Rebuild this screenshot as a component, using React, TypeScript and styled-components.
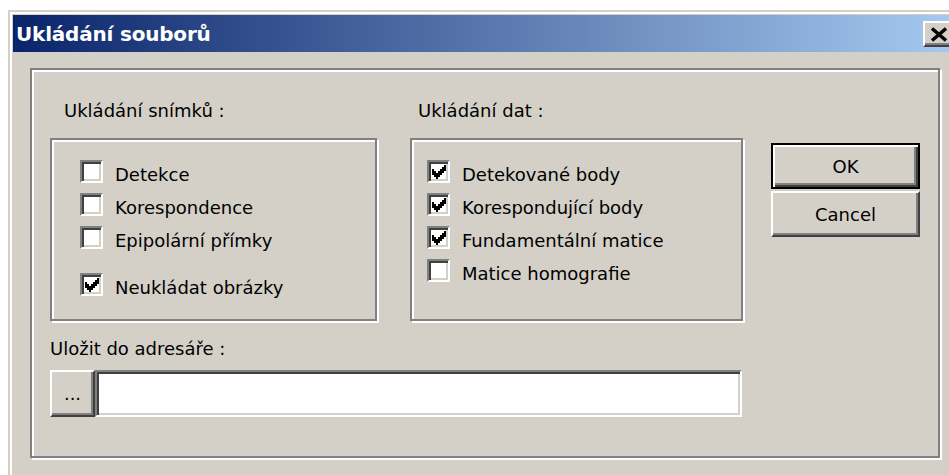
import styled, { createGlobalStyle } from "styled-components";

const face = "#d4d0c8";
const shadow = "#808080";
const darkShadow = "#404040";
const highlight = "#ffffff";

const GlobalStyle = createGlobalStyle`
  html, body {
    margin: 0;
    padding: 0;
    background: #fff;
    overflow: hidden;
  }
  body {
    font-family: "DejaVu Sans", Verdana, sans-serif;
  }
`;

const Page = styled.div`
  width: 949px;
  height: 475px;
  padding: 10px 0 0 8px;
  box-sizing: border-box;
  overflow: hidden;
`;

const Window = styled.div`
  width: 960px;
  height: 480px;
  box-sizing: border-box;
  background: ${face};
  border-top: 2px solid ${face};
  border-left: 2px solid ${face};
  box-shadow: inset 2px 2px 0 ${highlight};
  padding: 3px;
`;

const TitleBar = styled.div`
  width: 945px;
  height: 37px;
  display: flex;
  align-items: center;
  justify-content: space-between;
  background: linear-gradient(to right, #0a246a, #a6caf0);
  padding: 0 4px 0 3px;
  box-sizing: border-box;
`;

const TitleText = styled.span`
  color: #fff;
  font-weight: bold;
  font-size: 20px;
  letter-spacing: -0.2px;
`;

const CloseButton = styled.button`
  width: 31px;
  height: 26px;
  padding: 0;
  margin-top: 1px;
  box-sizing: border-box;
  background: ${face};
  border: 2px solid;
  border-color: ${highlight} ${darkShadow} ${darkShadow} ${highlight};
  box-shadow: inset -2px -2px 0 ${shadow};
  display: flex;
  align-items: center;
  justify-content: center;
`;

const Frame = styled.div`
  margin: 16px 0 0 17px;
  width: 910px;
  height: 390px;
  box-sizing: border-box;
  border: 2px solid ${shadow};
  box-shadow: inset 2px 2px 0 ${highlight}, 2px 2px 0 ${highlight};
  padding: 30px 0 0 18px;
  font-size: 18px;
  color: #000;
`;

const TopRow = styled.div`
  display: flex;
  align-items: flex-start;
`;

const Column = styled.div<{ $width: number; $gap?: number }>`
  width: ${({ $width }) => $width}px;
  margin-left: ${({ $gap }) => $gap ?? 0}px;
  display: flex;
  flex-direction: column;
`;

const Caption = styled.div<{ $indent?: number }>`
  height: 22px;
  line-height: 22px;
  padding-left: ${({ $indent }) => $indent ?? 0}px;
  white-space: nowrap;
`;

const GroupBox = styled.div<{ $padTop: number; $padLeft: number }>`
  margin-top: 16px;
  height: 183px;
  box-sizing: border-box;
  border: 2px solid ${shadow};
  box-shadow: inset 2px 2px 0 ${highlight}, 2px 2px 0 ${highlight};
  padding: ${({ $padTop, $padLeft }) => `${$padTop}px 0 0 ${$padLeft}px`};
  display: flex;
  flex-direction: column;
  gap: 10px;
`;

const CheckRow = styled.label<{ $spaced?: boolean }>`
  display: flex;
  align-items: center;
  gap: 12px;
  height: 23px;
  margin-top: ${({ $spaced }) => ($spaced ? 14 : 0)}px;
  white-space: nowrap;
`;

const CheckText = styled.span`
  line-height: 23px;
  padding-top: 5px;
`;

const Box = styled.span`
  width: 23px;
  height: 23px;
  flex: none;
  box-sizing: border-box;
  background: #fff;
  border: 2px solid;
  border-color: ${shadow} ${highlight} ${highlight} ${shadow};
  box-shadow: inset 2px 2px 0 ${darkShadow}, inset -2px -2px 0 ${face};
  display: flex;
  align-items: center;
  justify-content: center;
`;

const ButtonColumn = styled.div`
  margin-left: 28px;
  padding-top: 43px;
  display: flex;
  flex-direction: column;
  gap: 2px;
`;

const PushButton = styled.button<{ $default?: boolean }>`
  width: 149px;
  height: 46px;
  box-sizing: border-box;
  background: ${face};
  font-family: inherit;
  font-size: 18px;
  color: #000;
  padding: 0;
  border: 2px solid;
  border-color: ${({ $default }) =>
    $default
      ? "#000"
      : `${highlight} ${darkShadow} ${darkShadow} ${highlight}`};
  box-shadow: ${({ $default }) =>
    $default
      ? `inset 2px 2px 0 ${highlight}, inset -2px -2px 0 ${darkShadow}, inset -4px -4px 0 ${shadow}`
      : `inset -2px -2px 0 ${shadow}`};
`;

const PathLabel = styled.div`
  margin-top: 17px;
  height: 22px;
  line-height: 22px;
`;

const PathRow = styled.div`
  margin-top: 10px;
  display: flex;
  height: 47px;
`;

const BrowseButton = styled.button`
  width: 45px;
  height: 47px;
  box-sizing: border-box;
  background: ${face};
  font-family: inherit;
  font-size: 18px;
  padding: 0;
  border: 2px solid;
  border-color: ${highlight} ${darkShadow} ${darkShadow} ${highlight};
  box-shadow: inset -2px -2px 0 ${shadow};
`;

const PathInput = styled.div`
  width: 647px;
  height: 47px;
  box-sizing: border-box;
  background: #fff;
  border: 2px solid;
  border-color: ${shadow} ${highlight} ${highlight} ${shadow};
  box-shadow: inset 2px 2px 0 ${darkShadow}, inset -2px -2px 0 ${face};
`;

function CheckMark() {
  // classic 7x7 tick, one column of three pixels per step
  const tops = [2, 3, 4, 3, 2, 1, 0];
  return (
    <svg width="14" height="14" viewBox="0 0 7 7" shapeRendering="crispEdges">
      {tops.map((y, x) => (
        <rect key={x} x={x} y={y} width="1" height="3" fill="#000" />
      ))}
    </svg>
  );
}

function Check({
  label,
  checked,
  spaced,
}: {
  label: string;
  checked?: boolean;
  spaced?: boolean;
}) {
  return (
    <CheckRow $spaced={spaced}>
      <Box>{checked && <CheckMark />}</Box>
      <CheckText>{label}</CheckText>
    </CheckRow>
  );
}

export default function App() {
  return (
    <>
      <GlobalStyle />
      <Page>
        <Window>
          <TitleBar>
            <TitleText>Ukládání souborů</TitleText>
            <CloseButton>
              <svg width="18" height="15" viewBox="0 0 18 15">
                <path
                  d="M2 1.5 L16 13.5 M16 1.5 L2 13.5"
                  stroke="#000"
                  strokeWidth="3.6"
                />
              </svg>
            </CloseButton>
          </TitleBar>
          <Frame>
            <TopRow>
              <Column $width={327}>
                <Caption $indent={14}>Ukládání snímků :</Caption>
                <GroupBox $padTop={20} $padLeft={28}>
                  <Check label="Detekce" />
                  <Check label="Korespondence" />
                  <Check label="Epipolární přímky" />
                  <Check label="Neukládat obrázky" checked spaced />
                </GroupBox>
              </Column>
              <Column $width={333} $gap={33}>
                <Caption $indent={8}>Ukládání dat :</Caption>
                <GroupBox $padTop={20} $padLeft={15}>
                  <Check label="Detekované body" checked />
                  <Check label="Korespondující body" checked />
                  <Check label="Fundamentální matice" checked />
                  <Check label="Matice homografie" />
                </GroupBox>
              </Column>
              <ButtonColumn>
                <PushButton $default>OK</PushButton>
                <PushButton>Cancel</PushButton>
              </ButtonColumn>
            </TopRow>
            <PathLabel>Uložit do adresáře :</PathLabel>
            <PathRow>
              <BrowseButton>...</BrowseButton>
              <PathInput />
            </PathRow>
          </Frame>
        </Window>
      </Page>
    </>
  );
}
